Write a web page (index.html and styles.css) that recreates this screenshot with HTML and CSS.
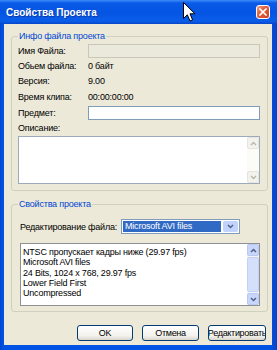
FILE: index.html
```html
<!DOCTYPE html>
<html lang="ru">
<head>
  <meta charset="UTF-8">
  <title>Свойства Проекта</title>
  <link rel="stylesheet" href="styles.css">
</head>
<body>
  <div class="window">
    <div class="titlebar">
      <span class="title">Свойства Проекта</span>
      <span class="close">
        <svg width="8" height="8" viewBox="0 0 8 8"><path d="M1 1L7 7M7 1L1 7" stroke="#fff" stroke-width="1.6" stroke-linecap="square"/></svg>
      </span>
    </div>
    <div class="client">
      <fieldset class="group info">
        <legend>Инфо файла проекта</legend>
        <div class="info-grid">
          <span>Имя Файла:</span><div class="input disabled"></div>
          <span>Обьем файла:</span><span>0 байт</span>
          <span>Версия:</span><span>9.00</span>
          <span>Время клипа:</span><span>00:00:00:00</span>
          <span>Предмет:</span><div class="input"></div>
          <span class="wide">Описание:</span>
          <div class="textarea wide">
            <div class="scrollbar off">
              <span class="arrow"><svg width="7" height="5" viewBox="0 0 7 5"><path d="M1 4L3.5 1.5L6 4" fill="none" stroke="#b9b8ad" stroke-width="1.4"/></svg></span>
              <span class="arrow"><svg width="7" height="5" viewBox="0 0 7 5"><path d="M1 1L3.5 3.5L6 1" fill="none" stroke="#b9b8ad" stroke-width="1.4"/></svg></span>
            </div>
          </div>
        </div>
      </fieldset>
      <fieldset class="group props">
        <legend>Свойства проекта</legend>
        <div class="select-row">
          <span class="select-label">Редактирование файла:</span>
          <div class="select">
            <span class="selected">Microsoft AVI files</span>
            <span class="drop"><svg width="7" height="5" viewBox="0 0 7 5"><path d="M1 1L3.5 3.5L6 1" fill="none" stroke="#4d6185" stroke-width="1.5"/></svg></span>
          </div>
        </div>
        <div class="listbox">
          <div class="lines">
            <div>NTSC пропускает кадры ниже (29.97 fps)</div>
            <div>Microsoft AVI files</div>
            <div>24 Bits, 1024 x 768, 29.97 fps</div>
            <div>Lower Field First</div>
            <div>Uncompressed</div>
          </div>
          <div class="scrollbar">
            <span class="arrow"><svg width="7" height="5" viewBox="0 0 7 5"><path d="M1 4L3.5 1.5L6 4" fill="none" stroke="#4d6185" stroke-width="1.5"/></svg></span>
            <span class="thumb"></span>
            <span class="arrow"><svg width="7" height="5" viewBox="0 0 7 5"><path d="M1 1L3.5 3.5L6 1" fill="none" stroke="#4d6185" stroke-width="1.5"/></svg></span>
          </div>
        </div>
      </fieldset>
      <div class="buttons">
        <button class="btn ok"><span>OK</span></button>
        <button class="btn cancel"><span>Отмена</span></button>
        <button class="btn edit"><span>Редактировать</span></button>
      </div>
    </div>
    <svg class="cursor" width="13" height="20" viewBox="0 0 13 20">
      <path d="M0.5 0.5L0.5 16.5L4.3 12.8L7 19L9.6 17.9L7 11.8L12 11.8Z" fill="#fff" stroke="#000" stroke-width="1" stroke-linejoin="miter"/>
    </svg>
  </div>
</body>
</html>
```

FILE: styles.css
```css
body {
  margin: 0;
  font-family: "Liberation Sans", Arial, sans-serif;
  font-size: 9px;
  letter-spacing: -0.2px;
  color: #000;
}
.window {
  position: relative;
  width: 277px;
  height: 350px;
  display: flex;
  flex-direction: column;
  background: linear-gradient(90deg, #0843d2 0, #0054e3 3px, #0054e3 270px, #0a43c4 277px);
}
.titlebar {
  height: 24px;
  display: flex;
  align-items: center;
  justify-content: space-between;
  background: linear-gradient(#3d8dfa 0, #0a5ae8 3px, #0554e3 50%, #0a5de9 88%, #0746c8 100%);
}
.title {
  padding-left: 6px;
  color: #fff;
  font-weight: bold;
  font-size: 10px;
  letter-spacing: 0;
  text-shadow: 1px 1px 0 #0b3aa8;
}
.close {
  width: 14px;
  height: 14px;
  margin-right: 7px;
  box-sizing: border-box;
  border: 1px solid #fff;
  border-radius: 3px;
  background: linear-gradient(135deg, #f0a184 0, #e2623f 40%, #cf4021 100%);
  display: flex;
  align-items: center;
  justify-content: center;
}
.client {
  flex: 1;
  margin: 0 5px 5px 4px;
  padding: 6px 4px 0 7px;
  background: #ece9d8;
  display: flex;
  flex-direction: column;
}
.group {
  margin: 0;
  min-width: 0;
  border: 1px solid #d0d0bf;
  border-radius: 3px;
}
.group legend {
  padding: 0 1px;
  line-height: 12px;
  color: #0046d5;
}
.info {
  padding: 1px 7px 6px 6px;
}
.info-grid {
  display: grid;
  grid-template-columns: 70px 1fr;
  grid-template-rows: 15px 15px 16px 16px 15px 16px 48px;
  align-items: center;
  white-space: nowrap;
}
.wide {
  grid-column: 1 / -1;
}
.input {
  height: 14px;
  box-sizing: border-box;
  border: 1px solid #7f9db9;
  background: #fff;
}
.input.disabled {
  border-color: #c9c7ba;
  background: #ebe9dc;
}
.textarea {
  height: 48px;
  box-sizing: border-box;
  border: 1px solid #9daabb;
  background: #fff;
  display: flex;
  justify-content: flex-end;
}
.scrollbar {
  width: 12px;
  display: flex;
  flex-direction: column;
  justify-content: space-between;
  background: #f4f3ee;
}
.arrow {
  height: 12px;
  box-sizing: border-box;
  border: 1px solid #b7caf5;
  border-radius: 2px;
  background: #c8d6fb;
  display: flex;
  align-items: center;
  justify-content: center;
}
.scrollbar.off {
  background: #fbfbf8;
}
.scrollbar.off .arrow {
  border-color: #e6e4dc;
  background: #f3f2ec;
}
.props {
  margin-top: 7px;
  padding: 9px 7px 5px 8px;
}
.props legend {
  margin-left: -2px;
}
.select-row {
  height: 15px;
  display: flex;
  align-items: center;
  white-space: nowrap;
}
.select-label {
  width: 101px;
}
.select {
  width: 119px;
  height: 15px;
  box-sizing: border-box;
  border: 1px solid #7f9db9;
  background: #fff;
  padding: 1px;
  display: flex;
}
.selected {
  flex: 1;
  padding-left: 2px;
  background: #316ac5;
  color: #fff;
  line-height: 11px;
}
.drop {
  width: 15px;
  margin-left: 2px;
  border-radius: 2px;
  background: #c1d3fb;
  display: flex;
  align-items: center;
  justify-content: center;
}
.listbox {
  margin-top: 9px;
  height: 63px;
  box-sizing: border-box;
  border: 1px solid #8e9091;
  background: #fff;
  display: flex;
}
.lines {
  flex: 1;
  padding: 3px 2px;
  line-height: 10.3px;
  white-space: nowrap;
}
.thumb {
  flex: 1;
  margin: 1px 0;
  border: 1px solid #c3d3f5;
  border-radius: 2px;
  background: #d4e0fb;
}
.buttons {
  margin: 13px 2px 0 0;
  display: flex;
  justify-content: flex-end;
  gap: 9px;
}
.btn {
  height: 16px;
  padding: 0;
  box-sizing: border-box;
  border: 1px solid #003c74;
  border-radius: 3px;
  background: linear-gradient(#ffffff, #f3f2ed 70%, #d9d5ca);
  font: inherit;
  letter-spacing: -0.3px;
  display: flex;
  align-items: center;
  justify-content: center;
  overflow: hidden;
  white-space: nowrap;
}
.ok {
  width: 56px;
}
.cancel {
  width: 57px;
}
.edit {
  width: 58px;
}
.cursor {
  position: absolute;
  left: 183px;
  top: 2px;
}
```
